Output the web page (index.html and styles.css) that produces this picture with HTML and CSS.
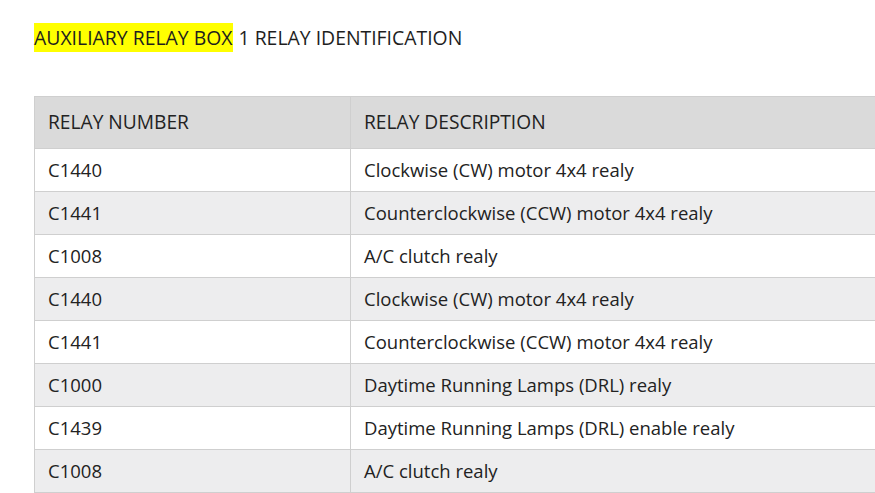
FILE: index.html
```html
<!DOCTYPE html>
<html>
<head>
<meta charset="utf-8">
<link rel="stylesheet" href="styles.css">
</head>
<body>
<div class="page">
  <p class="title"><span class="hl">AUXILIARY RELAY BOX</span> 1 RELAY IDENTIFICATION</p>
  <table class="relays">
    <thead>
      <tr><th class="num">RELAY NUMBER</th><th>RELAY DESCRIPTION</th></tr>
    </thead>
    <tbody>
      <tr><td>C1440</td><td>Clockwise (CW) motor 4x4 realy</td></tr>
      <tr><td>C1441</td><td>Counterclockwise (CCW) motor 4x4 realy</td></tr>
      <tr><td>C1008</td><td>A/C clutch realy</td></tr>
      <tr><td>C1440</td><td>Clockwise (CW) motor 4x4 realy</td></tr>
      <tr><td>C1441</td><td>Counterclockwise (CCW) motor 4x4 realy</td></tr>
      <tr><td>C1000</td><td>Daytime Running Lamps (DRL) realy</td></tr>
      <tr><td>C1439</td><td>Daytime Running Lamps (DRL) enable realy</td></tr>
      <tr><td>C1008</td><td>A/C clutch realy</td></tr>
    </tbody>
  </table>
</div>
</body>
</html>
```
FILE: styles.css
```css
html, body {
  margin: 0;
  padding: 0;
  background: #fff;
  overflow: hidden;
}
.page {
  padding: 0 0 0 34px;
  width: 1100px;
  font-family: "Open Sans", "Noto Sans", sans-serif;
  color: #222;
}
.title {
  margin: 0;
  padding-top: 24px;
  font-size: 19.4px;
  line-height: 28px;
  height: 72px;
  color: #1e1e1e;
}
.hl {
  background: #ffff00;
  padding: 1px 1px 1px 0;
}
.relays {
  border-collapse: collapse;
  width: 1000px;
  font-size: 18.5px;
}
.relays th, .relays td {
  border: 1px solid #cfcfcf;
  text-align: left;
  padding: 0 13px 2px;
  font-weight: normal;
}
.relays th {
  background: #dadada;
  height: 49px;
  font-size: 19.2px;
}
.relays td {
  height: 40px;
}
.relays .num {
  width: 289px;
}
.relays tbody tr:nth-child(even) td {
  background: #ededee;
}
```
